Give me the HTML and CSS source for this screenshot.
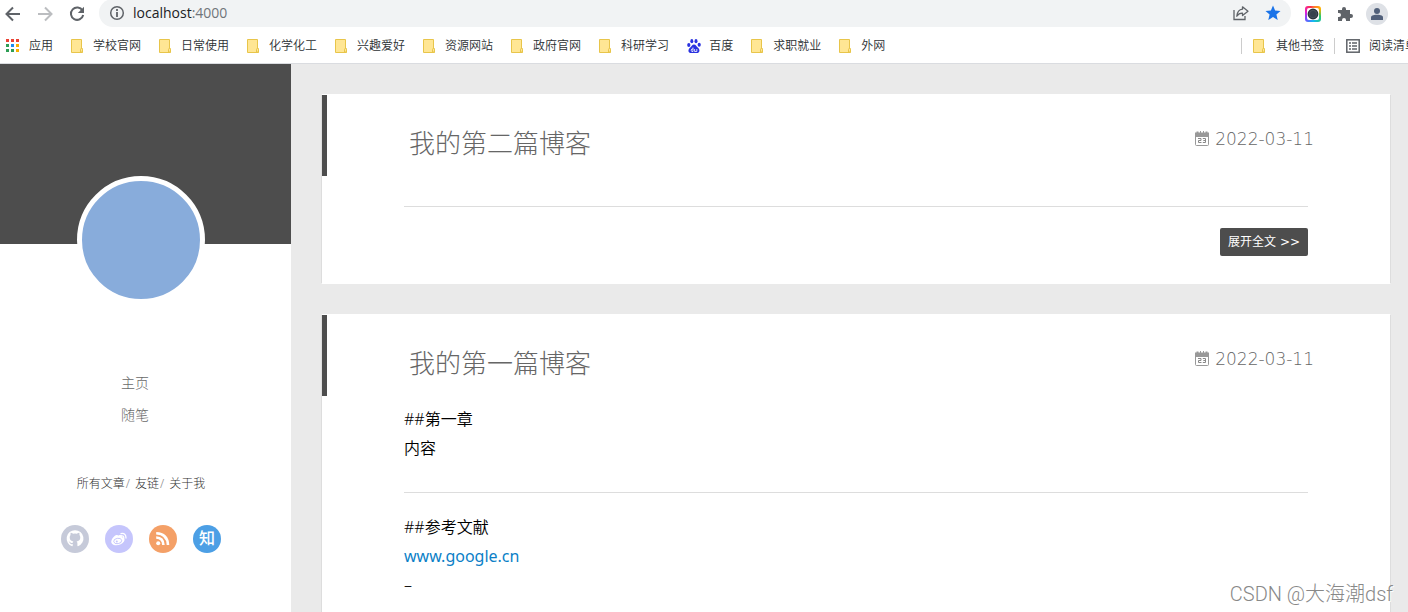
FILE: index.html
```html
<!DOCTYPE html>
<html lang="zh-CN">
<head>
<meta charset="utf-8">
<title>localhost:4000</title>
<link rel="stylesheet" href="styles.css">
</head>
<body>
<svg class="defs" aria-hidden="true">
  <symbol id="folder" viewBox="0 0 14 14"><path d="M.5.5h10v9.200h1v3.800H.5z" fill="#ffe694" stroke="#e8c54a"/><path d="M9.500 13V10.500q0-1 1-1t1 1V13z" fill="#ffe694" stroke="#e8c54a"/></symbol>
  <symbol id="calendar" viewBox="0 0 16 16"><path d="M1 1.500h1.500V.5h2v1h1.500V0h1v1.500h2V0h1v1.500h1.500v-1h2v1H15V6H1z" fill="#999"/><path d="M1.500 5v8.500q0 1 1 1h11q1 0 1-1V5" fill="none" stroke="#999"/><path d="M4 7.500h3v2H4.500v2H7.500M8.800 7.500h2.700v4H8.800M9.300 9.500h2" fill="none" stroke="#888" stroke-width="1"/></symbol>
</svg>
<header class="browser">
  <div class="toolbar">
    <button class="tool" aria-label="后退"><svg width="16" height="16" viewBox="0 0 16 16"><path d="M15 8H2M8 1.500 1.500 8 8 14.500" fill="none" stroke="#5f6368" stroke-width="2"/></svg></button>
    <button class="tool" aria-label="前进"><svg width="16" height="16" viewBox="0 0 16 16"><path d="M1 8h13M8 1.500 14.500 8 8 14.500" fill="none" stroke="#bbbdc0" stroke-width="2"/></svg></button>
    <button class="tool" aria-label="刷新"><svg width="16" height="16" viewBox="0 0 16 16"><path d="M13.500 4.500A6.200 6.200 0 1 0 14.200 9" fill="none" stroke="#5f6368" stroke-width="2"/><path d="M15 .8V7H8.800z" fill="#5f6368"/></svg></button>
    <div class="address">
      <svg width="16" height="16" viewBox="0 0 16 16"><circle cx="8" cy="8" r="6.300" fill="none" stroke="#5f6368" stroke-width="1.500"/><path d="M8 7v5M8 4v2" stroke="#5f6368" stroke-width="1.800"/></svg>
      <span class="url">localhost<span class="port">:4000</span></span>
      <button class="tool push" aria-label="分享"><svg width="16" height="16" viewBox="0 0 16 16"><path d="M1 5v9.500h11V11" fill="none" stroke="#5f6368" stroke-width="1.300"/><path d="M9.500 1.800 15 6.200l-5.500 4.300V8.200Q6 8 3.800 11.200 4.500 4.700 9.500 4.200z" fill="none" stroke="#5f6368" stroke-width="1.300" stroke-linejoin="round"/></svg></button>
      <button class="tool" aria-label="收藏"><svg width="16" height="16" viewBox="0 0 16 16"><path d="m8 .5 2.100 5.100 5.400.4-4.100 3.600 1.300 5.400L8 12.100 3.300 15l1.300-5.400L.5 6l5.400-.4z" fill="#1a73e8"/></svg></button>
    </div>
    <div class="extensions">
      <span class="camera"><svg width="16" height="16" viewBox="0 0 16 16"><rect x="2" y="2" width="12" height="12" rx="2" fill="#fff"/><circle cx="8" cy="8" r="4.400" fill="#36424d" stroke="#27323b" stroke-width="2"/><circle cx="8" cy="8" r="3.800" fill="none" stroke="#5b6770" stroke-width=".6"/></svg></span>
      <button class="tool" aria-label="扩展"><svg width="16" height="16" viewBox="0 0 16 16"><path d="M1 4h4V3a2 2 0 0 1 4 0v1h4v4h1a2 2 0 0 1 0 4h-1v3H9v-1a2 2 0 0 0-4 0v1H1v-4h1a2 2 0 0 0 0-4H1z" fill="#5f6368"/></svg></button>
      <button class="tool profile" aria-label="个人资料"><svg width="16" height="16" viewBox="0 0 16 16"><circle cx="8" cy="5" r="3" fill="#51607a"/><path d="M2 14v-2.500C2 9 6 8.800 8 8.800s6 .2 6 2.700V14z" fill="#51607a"/></svg></button>
    </div>
  </div>
  <nav class="bookmarks" aria-label="书签">
    <a href="#"><svg width="14" height="14" viewBox="0 0 14 14"><path d="M0 0h3v3H0zM5 0h3v3H5zM10 0h3v3h-3z" fill="#ea4335"/><path d="M0 5h3v3H0zM0 10h3v3H0zM5 10h3v3H5z" fill="#2e9e55"/><path d="M5 5h3v3H5z" fill="#1a8cf0"/><path d="M10 5h3v3h-3zM10 10h3v3h-3z" fill="#f7b000"/></svg>应用</a>
    <a href="#"><svg width="14" height="14"><use href="#folder"/></svg>学校官网</a>
    <a href="#"><svg width="14" height="14"><use href="#folder"/></svg>日常使用</a>
    <a href="#"><svg width="14" height="14"><use href="#folder"/></svg>化学化工</a>
    <a href="#"><svg width="14" height="14"><use href="#folder"/></svg>兴趣爱好</a>
    <a href="#"><svg width="14" height="14"><use href="#folder"/></svg>资源网站</a>
    <a href="#"><svg width="14" height="14"><use href="#folder"/></svg>政府官网</a>
    <a href="#"><svg width="14" height="14"><use href="#folder"/></svg>科研学习</a>
    <a href="#"><svg width="14" height="14" viewBox="0 0 14 14"><g fill="#2a32e0"><ellipse cx="1.800" cy="6" rx="1.600" ry="2"/><ellipse cx="4.800" cy="2.200" rx="1.500" ry="2.100"/><ellipse cx="9" cy="2.200" rx="1.500" ry="2.100"/><ellipse cx="12.200" cy="5.800" rx="1.600" ry="2"/><path d="M7 5.500c2 0 2.500 2 4 3.200 2.500 2 1.500 5.300-1 5.300H4c-2.800 0-3.500-3.300-1-5.300C4.500 7.500 5 5.500 7 5.500z"/></g><path d="M6 8.500v4H4.800q-1.200-1.200 0-2.500H6M7.600 10v2.500h2.200V10" fill="none" stroke="#fff" stroke-width=".8"/></svg>百度</a>
    <a href="#"><svg width="14" height="14"><use href="#folder"/></svg>求职就业</a>
    <a href="#"><svg width="14" height="14"><use href="#folder"/></svg>外网</a>
    <div class="bookmarks-end">
      <a href="#"><svg width="14" height="14"><use href="#folder"/></svg>其他书签</a>
      <a href="#"><svg width="14" height="14" viewBox="0 0 14 14"><rect x=".8" y=".8" width="12.400" height="12.400" fill="none" stroke="#5f6368" stroke-width="1.500"/><path d="M3 4h2M3 7h2M3 10h2M6 4h5M6 7h5M6 10h5" stroke="#5f6368" stroke-width="1.400"/></svg>阅读清单</a>
    </div>
  </nav>
</header>
<div class="page">
  <aside class="sidebar">
    <div class="banner"></div>
    <div class="profile-block">
      <div class="avatar"></div>
      <nav class="menu"><a href="#">主页</a><a href="#">随笔</a></nav>
      <nav class="links"><a href="#">所有文章</a><span class="slash">/</span><a href="#">友链</a><span class="slash">/</span><a href="#">关于我</a></nav>
      <div class="social">
        <a class="github" href="#" aria-label="GitHub"><svg width="28" height="28" viewBox="0 0 28 28"><path d="M14 5.200a8.300 8.300 0 0 0-2.900 16.100c.5.100.6-.2.600-.5v-1.700c-2 .5-2.800-.6-3.200-1.500-.3-.6-.8-.8-.8-1 1.300-.2 1.700 1.500 3 1.400.5 0 .9-.2 1.100-.6.1-.5.300-.8.600-1-2.200-.3-3.700-1.300-3.700-3.900 0-1 .3-1.800.9-2.400-.2-.8-.2-1.700.1-2.400.9 0 1.700.5 2.400 1q1.900-.5 3.800 0c.7-.5 1.500-1 2.400-1 .3.700.3 1.600.1 2.400.6.600.9 1.400.9 2.400 0 2.600-1.500 3.600-3.700 3.900.5.400.8 1 .8 1.800v2.600c0 .3.200.6.600.5A8.300 8.300 0 0 0 14 5.200z" fill="#fff"/></svg></a>
        <a class="weibo" href="#" aria-label="微博"><svg width="28" height="28" viewBox="0 0 28 28"><path d="M12.800 10.800c1-.8 3.600-1.500 4-.2.200.6-.1 1.300 0 1.500 2.700.6 3.500 2.200 2.200 4.500-2.300 4-10.500 5.300-12.500 1.500-1.200-2.800 2.800-7.600 5-8 1.100-.2 1.600.1 1.300.7z" fill="#fff"/><ellipse cx="12.700" cy="16" rx="4" ry="2.700" transform="rotate(-10 12.700 16)" fill="none" stroke="#c5c5fc" stroke-width=".9"/><circle cx="11.800" cy="16.600" r="1" fill="#c5c5fc"/><path d="M16 8.600q5-.9 5 4.500M16.500 11q2.300-.4 2.300 2" fill="none" stroke="#fff" stroke-width="1.300" stroke-linecap="round"/></svg></a>
        <a class="rss" href="#" aria-label="RSS"><svg width="28" height="28" viewBox="0 0 28 28"><circle cx="9.200" cy="18.200" r="2" fill="#fff"/><path d="M7.200 12.500q7 .2 7.200 7.500M7.200 8.200q11.300.5 11.800 11.800" fill="none" stroke="#fff" stroke-width="2.600"/></svg></a>
        <a class="zhihu" href="#">知</a>
      </div>
    </div>
  </aside>
  <main class="posts">
    <article class="post">
      <header class="post-head"><h1><a href="#">我的第二篇博客</a></h1><time datetime="2022-03-11"><svg width="16" height="16"><use href="#calendar"/></svg>2022-03-11</time></header>
      <div class="post-foot"><a class="more" href="#">展开全文 &gt;&gt;</a></div>
    </article>
    <article class="post">
      <header class="post-head"><h1><a href="#">我的第一篇博客</a></h1><time datetime="2022-03-11"><svg width="16" height="16"><use href="#calendar"/></svg>2022-03-11</time></header>
      <div class="post-body">
        <p>##第一章<br>内容</p>
        <hr>
        <p>##参考文献<br><a href="#">www.google.cn</a><br>–</p>
      </div>
    </article>
  </main>
</div>
<div class="watermark">CSDN @大海潮dsf</div>
</body>
</html>
```
FILE: styles.css
```css
* { box-sizing: border-box; }
body {
  margin: 0;
  height: 100vh;
  overflow: hidden;
  display: flex;
  flex-direction: column;
  background: #eaeaea;
  font-family: "Noto Sans", "Noto Sans CJK SC", sans-serif;
  color: #000;
}
a { color: inherit; text-decoration: none; }
svg { display: block; flex: none; }
.defs { position: absolute; width: 0; height: 0; }
.browser { flex: none; background: #fff; border-bottom: 1px solid #dadce0; overflow: hidden; }
.toolbar { display: flex; align-items: center; gap: 16px; height: 27px; padding: 0 20px 0 5px; }
.tool { flex: none; padding: 0; border: 0; background: none; }
.address {
  flex: 1;
  display: flex;
  align-items: center;
  gap: 16px;
  height: 28px;
  margin: -1px 0 0 -2px;
  padding: 0 10px;
  border-radius: 14px;
  background: #f1f3f4;
}
.url { margin-left: -8px; font: 14px/20px "Open Sans", sans-serif; color: #202124; }
.port { color: #70757a; }
.push { margin-left: auto; }
.extensions { display: flex; align-items: center; gap: 16px; margin-left: -2px; }
.camera { border-radius: 3px; background: conic-gradient(#ff6a3d, #ffb300 15%, #2cc96b 30%, #12b8f5 50%, #7a4cff 65%, #e91ed0 80%, #ff3048 95%, #ff6a3d); }
.profile { display: flex; align-items: center; justify-content: center; width: 22px; height: 22px; border-radius: 50%; background: #dee1e6; margin: 0 0 0 -3px; }
.bookmarks { display: flex; align-items: center; gap: 18px; height: 36px; padding: 1px 0 0 6px; font-size: 12px; line-height: 18px; font-weight: 350; color: #2c3033; white-space: nowrap; }
.bookmarks a { display: flex; align-items: center; gap: 8px; }
.bookmarks > a:first-child { gap: 9px; }
.bookmarks-end { display: flex; margin: 0 -9px 0 auto; }
.bookmarks .bookmarks-end a { gap: 9px; height: 16px; padding: 0 10px 0 11px; border-left: 1px solid #ccc; }
.bookmarks .bookmarks-end a:last-child { padding-right: 0; }
.page { flex: 1; min-height: 0; display: flex; }
.sidebar { flex: none; width: 291px; background: #fff; }
.banner { height: 180px; background: #4d4d4d; }
.profile-block { width: 282px; display: flex; flex-direction: column; align-items: center; margin-top: -68px; }
.avatar { width: 128px; height: 128px; border: 5px solid #fff; border-radius: 50%; background: #88acdb; }
.menu { display: flex; flex-direction: column; margin: 63px 12px 0 0; font-size: 14px; line-height: 32px; font-weight: 300; color: #696969; }
.links { display: flex; gap: 1px; margin-top: 43px; font-size: 12px; line-height: 20px; font-weight: 300; color: #333; }
.slash { margin-right: 4px; color: #888; }
.social { display: flex; gap: 16px; margin-top: 31px; }
.social a { width: 28px; height: 28px; border-radius: 50%; color: #fff; text-align: center; font-size: 16px; line-height: 26px; font-weight: 500; }
.github { background: #c6cad9; }
.weibo { background: #c5c5fc; }
.rss { background: #f4a067; }
.zhihu { background: #4c9fe5; }
.posts { flex: 1; min-width: 0; display: flex; flex-direction: column; gap: 30px; padding: 30px 17px 0 30px; }
.post { flex: none; background: #fff; border: 1px solid #ddd; border-top-color: #fff; border-bottom-color: #fff; }
.post-head { display: flex; justify-content: space-between; height: 81px; padding: 28px 76px 0 82px; border-left: 5px solid #4d4d4d; }
h1 { margin: 0; font-size: 26px; line-height: 40px; font-weight: 200; color: #666; }
time { display: flex; align-items: center; gap: 5px; height: 32px; font: 200 17px/32px "DejaVu Sans", sans-serif; color: #666; }
.post-foot { display: flex; justify-content: flex-end; margin: 30px 82px 0 82px; padding: 21px 0 27px; border-top: 1px solid #ddd; }
.more { padding: 0 8px; border-radius: 2px; background: #4d4d4d; color: #fff; font: 12px/28px "DejaVu Sans", "Noto Sans CJK SC", sans-serif; }
.post-body { padding: 9px 82px 30px 82px; font-size: 16px; line-height: 29px; font-weight: 350; }
.post-body p { margin: 0; }
.post-body hr { margin: 29px 0 20px; border: 0; border-top: 1px solid #ddd; }
.post-body a { font-weight: 400; color: #0b7fc7; }
.watermark { position: absolute; right: 15px; bottom: 4px; font: 300 20px/28px Roboto, "Noto Sans CJK SC", sans-serif; color: #888; text-shadow: 1px 1px 0 #fff; }
```
